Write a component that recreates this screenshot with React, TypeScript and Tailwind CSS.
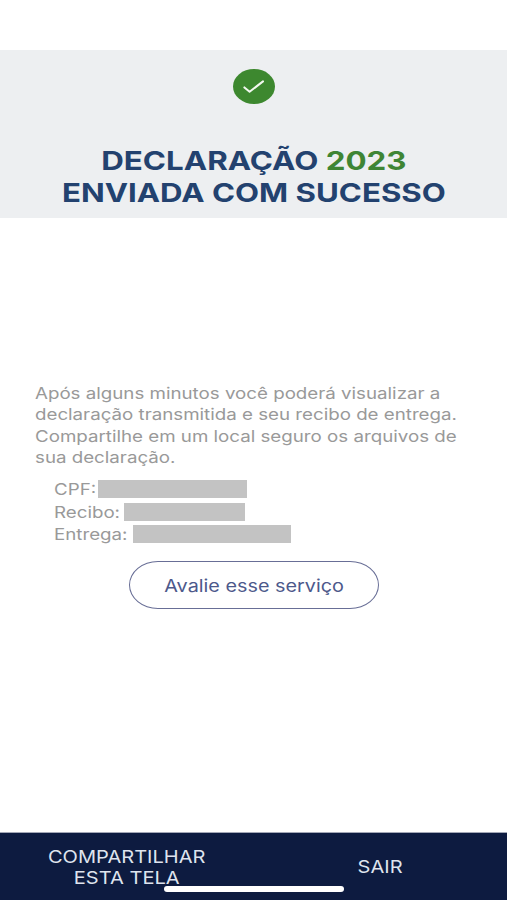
import React from 'react';

interface ReceiptField {
  label: string;
  barClass: string;
}

const fields: ReceiptField[] = [
  { label: 'CPF:', barClass: 'left-[44px] w-[149px]' },
  { label: 'Recibo:', barClass: 'left-[70px] w-[121px]' },
  { label: 'Entrega:', barClass: 'left-[79px] w-[158px]' },
];

const CheckBadge: React.FC = () => (
  <svg width="42" height="35" viewBox="0 0 42 35" fill="none">
    <ellipse cx="21" cy="17.5" rx="21" ry="17.5" fill="#3d882f" />
    <path d="M11.4 18.4 L16.6 22.8 L30 12.4" stroke="#f3f8f0" strokeWidth="2" strokeLinecap="round" strokeLinejoin="round" />
  </svg>
);

const App: React.FC = () => {
  return (
    <div className="flex h-[900px] w-[507px] flex-col overflow-hidden bg-white pt-[50px] font-['Inter',sans-serif]">
      <header className="flex h-[168px] shrink-0 flex-col items-center bg-[#edeff1] pt-[19px]">
        <CheckBadge />
        <h1 className="mt-[41px] text-center text-[26px] font-bold leading-[32px] whitespace-nowrap text-[#23426f]">
          <span className="block scale-x-[1.205]">
            DECLARAÇÃO <span className="text-[#3f8534]">2023</span>
          </span>
          <span className="block scale-x-[1.2]">ENVIADA COM SUCESSO</span>
        </h1>
      </header>

      <main className="flex flex-1 flex-col pt-[165px] text-[16px] text-[#999999]">
        <div className="pl-[35px] whitespace-nowrap">
          <p className="origin-left scale-x-[1.17] leading-[21px]">
            <span className="block">Após alguns minutos você poderá visualizar a</span>
            <span className="block">declaração transmitida e seu recibo de entrega.</span>
          </p>
          <p className="mt-px origin-left scale-x-[1.17] leading-[21px]">
            <span className="block">Compartilhe em um local seguro os arquivos de</span>
            <span className="block">sua declaração.</span>
          </p>
        </div>

        <ul className="mt-[10px] pl-[54px]">
          {fields.map((field) => (
            <li key={field.label} className="relative h-[22.5px] leading-[23px]">
              <span className="inline-block origin-left scale-x-[1.17]">{field.label}</span>
              <span className={`absolute top-[2px] h-[18px] bg-[#c3c3c3] ${field.barClass}`} />
            </li>
          ))}
        </ul>

        <button className="mt-[15px] ml-[129px] h-[48px] w-[250px] rounded-[29px/24px] border-[1.5px] border-[#686e96] pt-[4px] text-[17px] text-[#4d598b]">
          <span className="inline-block scale-x-[1.165] whitespace-nowrap">Avalie esse serviço</span>
        </button>
      </main>

      <footer className="relative grid h-[68px] shrink-0 grid-cols-2 items-center border-t border-[#a3a8b7] bg-[#0d1b40] pt-[2px] text-center text-[17px] leading-[21px] text-[#dfe4ee]">
        <button>
          <span className="block scale-x-[1.18]">COMPARTILHAR</span>
          <span className="block scale-x-[1.18]">ESTA TELA</span>
        </button>
        <button>
          <span className="inline-block scale-x-[1.18]">SAIR</span>
        </button>
        <span className="absolute top-[53px] left-[164px] h-[6px] w-[180px] rounded-full bg-white" />
      </footer>
    </div>
  );
};

export default App;
